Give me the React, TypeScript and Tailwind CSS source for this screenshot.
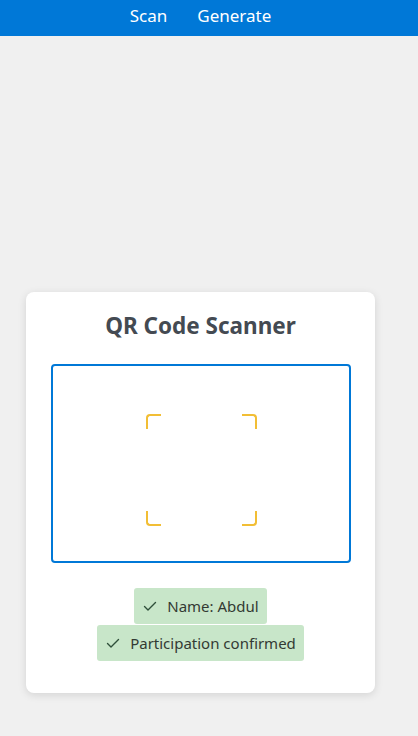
import React from 'react'

function Check() {
  return (
    <svg width="16" height="16" viewBox="0 0 16 16" fill="none" className="shrink-0">
      <path d="M2.5 8.5 L6 12 L13.5 4.5" stroke="#2f4f3a" strokeWidth="1.4" strokeLinecap="round" strokeLinejoin="round" />
    </svg>
  )
}

function Corner({ className }: { className: string }) {
  return <div className={`w-[15px] h-[15px] border-[#f2be35] ${className}`} />
}

export default function App() {
  return (
    <div className="min-h-[736px] bg-[#f0f0f0] font-['Noto_Sans','Open_Sans',sans-serif]">
      {/* Nav */}
      <div className="h-9 bg-[#0078d7] flex items-center justify-center gap-[30px] pr-[17px] pb-[4px] text-white text-[17px]">
        <span>Scan</span>
        <span>Generate</span>
      </div>

      <div className="pt-[256px] pl-[26px]">
        <div className="w-[349px] h-[401px] bg-white rounded-lg shadow-[0_2px_8px_rgba(0,0,0,0.12)] flex flex-col items-center pt-[20px]">
          <h1 className="text-[22.5px] font-bold text-[#444a52] leading-[28px]">QR Code Scanner</h1>

          <div className="mt-[24px] w-[300px] h-[199px] border-2 border-[#0078d7] rounded flex items-center justify-center pt-[12px] pl-[2px]">
            <div className="w-[111px] h-[112px] flex flex-col justify-between">
              <div className="flex justify-between">
                <Corner className="border-t-2 border-l-2 rounded-tl-[4px]" />
                <Corner className="border-t-2 border-r-2 rounded-tr-[4px]" />
              </div>
              <div className="flex justify-between">
                <Corner className="border-b-2 border-l-2 rounded-bl-[4px]" />
                <Corner className="border-b-2 border-r-2 rounded-br-[4px]" />
              </div>
            </div>
          </div>

          <div className="mt-[25px] flex flex-col items-center gap-px text-[15px] text-[#333a33]">
            <div className="h-9 px-[8px] bg-[#c8e6c9] rounded-[3px] flex items-center gap-[9px]">
              <Check />
              <span>Name: Abdul</span>
            </div>
            <div className="h-9 px-[8px] bg-[#c8e6c9] rounded-[3px] flex items-center gap-[9px]">
              <Check />
              <span>Participation confirmed</span>
            </div>
          </div>
        </div>
      </div>
    </div>
  )
}
